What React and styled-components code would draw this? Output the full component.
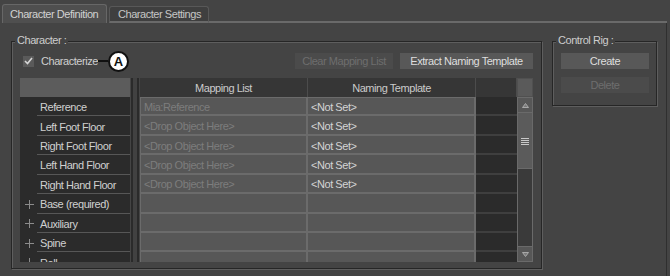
import React from 'react';
import styled, { createGlobalStyle } from 'styled-components';

const GlobalStyle = createGlobalStyle`
  *, *::before, *::after { box-sizing: border-box; }
  html, body { margin: 0; padding: 0; background: #444444; }
  body {
    font-family: "Liberation Sans", Arial, sans-serif;
    font-size: 11px;
    letter-spacing: -0.45px;
    color: #cacaca;
  }
`;

const Screen = styled.div`
  width: 670px;
  height: 276px;
  overflow: hidden;
  background: #444444;
  display: flex;
  flex-direction: column;
`;

const TabBar = styled.div`
  display: flex;
  align-items: flex-end;
  height: 23px;
  width: 667px;
  padding-left: 2px;
  flex-shrink: 0;
`;

const Tab = styled.div`
  width: ${p => p.$w}px;
  height: ${p => (p.$active ? 19 : 17)}px;
  margin-right: 2px;
  padding-left: ${p => (p.$active ? 7 : 8)}px;
  padding-bottom: ${p => (p.$active ? 1 : 0)}px;
  display: flex;
  align-items: center;
  white-space: nowrap;
  background: ${p => (p.$active ? '#4f4f4f' : '#3f3f3f')};
  border: 1px solid ${p => (p.$active ? '#676767' : '#585858')};
  border-bottom: ${p => (p.$active ? 'none' : '2px solid #6a6a6a')};
  border-radius: 3px 3px 0 0;
  color: ${p => (p.$active ? '#d2d2d2' : '#c6c6c6')};
`;

const TabFiller = styled.div`
  flex: 1;
  margin-left: -2px;
  border-bottom: 2px solid #6a6a6a;
`;

const Body = styled.div`
  flex: 1;
  width: 667px;
  display: flex;
  align-items: flex-start;
  padding: 18px 0 0 11px;
  border-right: 1px solid #2f2f2f;
`;

const Group = styled.div`
  position: relative;
  flex-shrink: 0;
  width: ${p => p.$w}px;
  height: ${p => p.$h}px;
  margin-right: ${p => p.$gap || 0}px;
  padding: 11px ${p => p.$pr}px 0 8px;
  border: 1px solid #262626;
  box-shadow: 1px 1px 0 #5e5e5e, inset 1px 1px 0 #5e5e5e;
`;

const Legend = styled.span`
  position: absolute;
  top: -8px;
  left: 3px;
  padding: 0 2px;
  line-height: 13px;
  background: #444444;
  color: #cdcdcd;
  white-space: nowrap;
`;

const TopRow = styled.div`
  display: flex;
  align-items: center;
  height: 16px;
  padding-left: 3px;
  margin-bottom: 9px;
`;

const CheckBox = styled.span`
  width: 11px;
  height: 11px;
  background: #5a5a5a;
  display: flex;
  align-items: center;
  justify-content: center;
`;

const CheckLabel = styled.span`
  margin-left: 7px;
  color: #cfcfcf;
`;

const Leader = styled.span`
  width: 10px;
  height: 2px;
  background: #111111;
`;

const Callout = styled.span`
  width: 21px;
  height: 21px;
  border-radius: 50%;
  background: #ffffff;
  border: 2px solid #111111;
  display: flex;
  align-items: center;
  justify-content: center;
  font-weight: bold;
  font-size: 13px;
  letter-spacing: 0;
  color: #111111;
`;

const Spacer = styled.span`
  flex: 1;
`;

const Button = styled.button`
  width: ${p => p.$w}px;
  height: 16px;
  margin: ${p => p.$m || '0'};
  padding: 0;
  border: none;
  background: ${p => (p.disabled ? '#4b4b4b' : '#585858')};
  color: ${p => (p.disabled ? '#6e6e6e' : '#dedede')};
  font: inherit;
  letter-spacing: inherit;
  white-space: nowrap;
  display: block;
`;

const Table = styled.div`
  display: flex;
  height: 184px;
  overflow: hidden;
`;

const NameCol = styled.div`
  width: 110px;
  display: flex;
  flex-direction: column;
  background: #2b2b2b;
`;

const NameHeader = styled.div`
  height: 19px;
  flex-shrink: 0;
  background: #5c5c5c;
`;

const NameRow = styled.div`
  height: 19.43px;
  flex-shrink: 0;
  display: flex;
`;

const Expander = styled.span`
  width: 17px;
  display: flex;
  align-items: center;
  justify-content: center;
  padding: 1px 0 0 2px;
`;

const NameLabel = styled.span`
  flex: 1;
  display: flex;
  align-items: center;
  padding: 2px 0 0 3px;
  border-bottom: 1px solid #575757;
  color: #d0d0d0;
  white-space: nowrap;
`;

const Splitter = styled.div`
  width: 8px;
  margin: 0 1px;
  border-left: 2px solid #2a2a2a;
  border-right: 2px solid #2a2a2a;
  background: #414141;
`;

const GridArea = styled.div`
  flex: 1;
  display: flex;
`;

const Columns = styled.div`
  flex: 1;
  display: flex;
  flex-direction: column;
  overflow: hidden;
`;

const HeaderRow = styled.div`
  display: grid;
  grid-template-columns: 168px 168px 41px;
  height: 19px;
  flex-shrink: 0;
  background: #363636;
`;

const HeaderCell = styled.div`
  display: flex;
  align-items: center;
  justify-content: center;
  border-right: 1px solid #4c4c4c;
  color: #cbcbcb;
`;

const DataRow = styled.div`
  display: grid;
  grid-template-columns: 168px 168px 41px;
  height: 19.43px;
  flex-shrink: 0;
`;

const Cell = styled.div`
  display: flex;
  align-items: center;
  padding: 2px 0 0 3px;
  background: #575757;
  border-left: ${p => (p.$first ? '1px solid #6b6b6b' : 'none')};
  border-right: 2px solid #6b6b6b;
  border-bottom: 2px solid #6b6b6b;
  border-top: ${p => (p.$top ? '1px solid #6b6b6b' : 'none')};
  color: ${p => (p.$dim ? '#7d7d7d' : '#d4d4d4')};
  white-space: nowrap;
  overflow: hidden;
`;

const DarkCell = styled.div`
  background: #2b2b2b;
  border-bottom: 2px solid #3f3f3f;
`;

const ScrollCol = styled.div`
  width: 16px;
  display: flex;
  flex-direction: column;
`;

const ScrollCorner = styled.div`
  height: 19px;
  flex-shrink: 0;
  background: #5a5a5a;
  border: 1px solid #505050;
`;

const ScrollBar = styled.div`
  flex: 1;
  display: flex;
  flex-direction: column;
  background: #3a3a3a;
  border: 1px solid #6a6a6a;
`;

const ArrowButton = styled.div`
  height: 15px;
  flex-shrink: 0;
  background: #575757;
  display: flex;
  align-items: center;
  justify-content: center;
  border-top: ${p => (p.$down ? '1px solid #6a6a6a' : 'none')};
  border-bottom: ${p => (p.$down ? 'none' : '1px solid #6a6a6a')};
`;

const Thumb = styled.div`
  height: 56px;
  flex-shrink: 0;
  background: #5b5b5b;
  border-bottom: 1px solid #6a6a6a;
  display: flex;
  align-items: center;
  justify-content: center;
`;

const Track = styled.div`
  flex: 1;
`;

const SideButtons = styled.div`
  display: flex;
  flex-direction: column;
  gap: 8px;
`;

const Check = () => (
  <svg width="9" height="8" viewBox="0 0 9 8">
    <path d="M1 4 L3.5 6.5 L8 1" fill="none" stroke="#d6d6d6" strokeWidth="1.6" />
  </svg>
);

const Plus = () => (
  <svg width="9" height="9" viewBox="0 0 9 9">
    <path d="M0 4.5 H9 M4.5 0 V9" stroke="#8c8c8c" strokeWidth="1" />
  </svg>
);

const Arrow = ({ down }) => (
  <svg width="7" height="5" viewBox="0 0 7 5">
    <path
      d={down ? 'M0.5 0.5 H6.5 L3.5 4.5 Z' : 'M0.5 4.5 H6.5 L3.5 0.5 Z'}
      fill="#7a7a7a"
      stroke="#a8a8a8"
      strokeWidth="1"
    />
  </svg>
);

const Grip = () => (
  <svg width="8" height="8" viewBox="0 0 8 8">
    <path d="M0 1.5 H8 M0 3.5 H8 M0 5.5 H8 M0 7.5 H8" stroke="#c9c9c9" strokeWidth="1" />
  </svg>
);

const rows = [
  { name: 'Reference', map: 'Mia:Reference', naming: '<Not Set>' },
  { name: 'Left Foot Floor', map: '<Drop Object Here>', naming: '<Not Set>' },
  { name: 'Right Foot Floor', map: '<Drop Object Here>', naming: '<Not Set>' },
  { name: 'Left Hand Floor', map: '<Drop Object Here>', naming: '<Not Set>' },
  { name: 'Right Hand Floor', map: '<Drop Object Here>', naming: '<Not Set>' },
  { name: 'Base (required)', group: true },
  { name: 'Auxiliary', group: true },
  { name: 'Spine', group: true },
  { name: 'Roll', group: true },
];

export default function App() {
  return (
    <Screen>
      <GlobalStyle />
      <TabBar>
        <Tab $active $w={105}>Character Definition</Tab>
        <Tab $w={100}>Character Settings</Tab>
        <TabFiller />
      </TabBar>
      <Body>
        <Group $w={531} $h={228} $pr={8} $gap={10}>
          <Legend>Character :</Legend>
          <TopRow>
            <CheckBox><Check /></CheckBox>
            <CheckLabel>Characterize</CheckLabel>
            <Leader />
            <Callout>A</Callout>
            <Spacer />
            <Button $w={98} $m="0 7px 0 0" disabled>Clear Mapping List</Button>
            <Button $w={133}>Extract Naming Template</Button>
          </TopRow>
          <Table>
            <NameCol>
              <NameHeader />
              {rows.map((r, i) => (
                <NameRow key={i}>
                  <Expander>{r.group && <Plus />}</Expander>
                  <NameLabel>{r.name}</NameLabel>
                </NameRow>
              ))}
            </NameCol>
            <Splitter />
            <GridArea>
              <Columns>
                <HeaderRow>
                  <HeaderCell>Mapping List</HeaderCell>
                  <HeaderCell>Naming Template</HeaderCell>
                  <HeaderCell />
                </HeaderRow>
                {rows.map((r, i) => (
                  <DataRow key={i}>
                    <Cell $first $dim $top={i === 0}>{r.map}</Cell>
                    <Cell $top={i === 0}>{r.naming}</Cell>
                    <DarkCell />
                  </DataRow>
                ))}
              </Columns>
              <ScrollCol>
                <ScrollCorner />
                <ScrollBar>
                  <ArrowButton><Arrow /></ArrowButton>
                  <Thumb><Grip /></Thumb>
                  <Track />
                  <ArrowButton $down><Arrow down /></ArrowButton>
                </ScrollBar>
              </ScrollCol>
            </GridArea>
          </Table>
        </Group>
        <Group $w={105} $h={65} $pr={7}>
          <Legend>Control Rig :</Legend>
          <SideButtons>
            <Button $w={88}>Create</Button>
            <Button $w={88} disabled>Delete</Button>
          </SideButtons>
        </Group>
      </Body>
    </Screen>
  );
}
